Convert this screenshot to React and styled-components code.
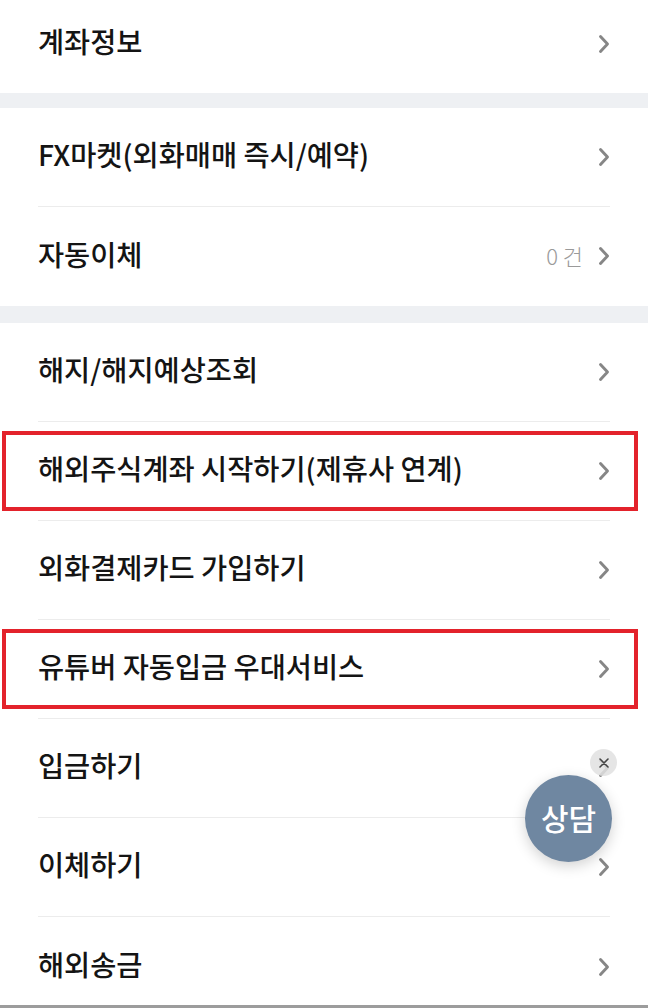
import React from "react";
import styled, { createGlobalStyle } from "styled-components";

const GlobalStyle = createGlobalStyle`
  html, body {
    margin: 0;
    padding: 0;
    background: #ffffff;
    overflow: hidden;
  }
  body {
    font-family: "Noto Sans CJK KR", "Noto Sans", sans-serif;
  }
`;

const Page = styled.div`
  height: 1008px;
  overflow: hidden;
  position: relative;
`;

const Scroller = styled.div`
  margin-top: -6px;
`;

const Section = styled.section`
  background: #ffffff;
  padding: 0 38px;
`;

const Band = styled.div`
  height: ${(p) => p.h || 15}px;
  background: #eef0f3;
`;

const Row = styled.div`
  position: relative;
  height: 99px;
  display: flex;
  align-items: center;
  justify-content: space-between;
  box-sizing: border-box;
  border-bottom: ${(p) => (p.last ? "none" : "1px solid #ececec")};

  ${(p) =>
    p.highlight &&
    `
    &::before {
      content: "";
      position: absolute;
      left: -36px;
      right: -28px;
      top: 9px;
      bottom: 9px;
      border: 4px solid #e3222b;
      pointer-events: none;
    }
  `}
`;

const Label = styled.span`
  font-size: 28.4px;
  font-weight: 500;
  color: #141414;
  line-height: 1.2;
  margin-bottom: 5px;
`;

const Right = styled.div`
  display: flex;
  align-items: center;
  gap: 14px;
  margin-right: -1px;
`;

const Count = styled.span`
  font-size: 22px;
  font-weight: 300;
  color: #9a9a9a;
  line-height: 1.2;
  margin-bottom: 3px;
`;

const Chevron = () => (
  <svg width="14" height="22" viewBox="0 0 14 22">
    <polyline
      points="3.5,3.5 10.5,11 3.5,18.5"
      fill="none"
      stroke="#868686"
      strokeWidth="2.9"
      strokeLinecap="round"
      strokeLinejoin="round"
    />
  </svg>
);

const Consult = styled.button`
  position: absolute;
  left: 525px;
  top: 775px;
  width: 87px;
  height: 87px;
  border-radius: 50%;
  border: none;
  background: #6f87a1;
  color: #ffffff;
  font-family: "Noto Sans CJK KR", sans-serif;
  font-size: 30px;
  font-weight: 500;
  box-shadow: 0 4px 14px rgba(0, 0, 0, 0.18);
  display: flex;
  align-items: center;
  justify-content: center;
  padding: 0 0 3px;
`;

const CloseDot = styled.div`
  position: absolute;
  left: 590px;
  top: 749px;
  width: 27px;
  height: 27px;
  border-radius: 50%;
  background: rgba(225, 225, 225, 0.85);
  display: flex;
  align-items: center;
  justify-content: center;
`;

const BottomEdge = styled.div`
  position: absolute;
  left: 0;
  right: 0;
  bottom: 0;
  height: 3px;
  background: #9c9c9c;
`;

const sections = [
  [{ label: "계좌정보" }],
  [
    { label: "FX마켓(외화매매 즉시/예약)" },
    { label: "자동이체", count: "0 건" },
  ],
  [
    { label: "해지/해지예상조회" },
    { label: "해외주식계좌 시작하기(제휴사 연계)", highlight: true },
    { label: "외화결제카드 가입하기" },
    { label: "유튜버 자동입금 우대서비스", highlight: true },
    { label: "입금하기" },
    { label: "이체하기" },
    { label: "해외송금" },
  ],
];

export default function App() {
  return (
    <Page>
      <GlobalStyle />
      <Scroller>
        {sections.map((rows, i) => (
          <React.Fragment key={i}>
            {i > 0 && <Band h={i === 2 ? 17 : 15} />}
            <Section>
              {rows.map((r, j) => (
                <Row key={r.label} highlight={r.highlight} last={j === rows.length - 1}>
                  <Label>{r.label}</Label>
                  <Right>
                    {r.count && <Count>{r.count}</Count>}
                    <Chevron />
                  </Right>
                </Row>
              ))}
            </Section>
          </React.Fragment>
        ))}
      </Scroller>
      <CloseDot>
        <svg width="12" height="12" viewBox="0 0 12 12">
          <path d="M2 2 L10 10 M10 2 L2 10" stroke="#444" strokeWidth="1.6" strokeLinecap="round" />
        </svg>
      </CloseDot>
      <Consult>상담</Consult>
      <BottomEdge />
    </Page>
  );
}
